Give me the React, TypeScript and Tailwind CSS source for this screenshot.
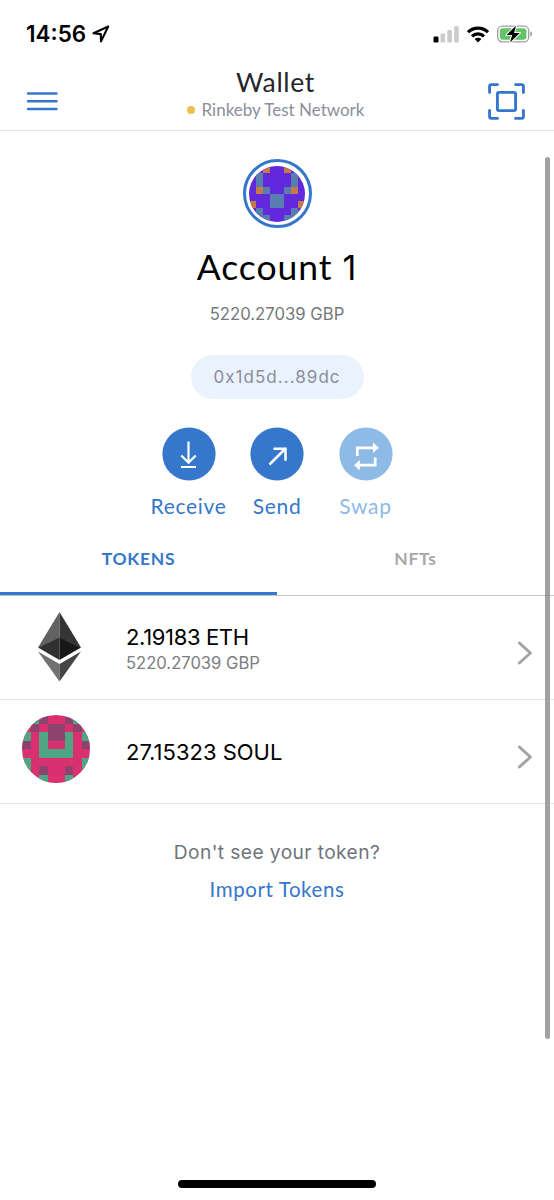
import type { ReactNode } from "react";

const ACCOUNT_GRID = [
  "..o..o..",
  ".b....b.",
  ".b....b.",
  ".ob..bo.",
  "...bb...",
  "o..bb..o",
  ".b....b.",
  ".bb..bb.",
];

const SOUL_GRID = [
  ".gp..pg.",
  ".p.pp.p.",
  "g.gppg.g",
  "p.g..g.p",
  "..gggg..",
  "g......g",
  "g.p..p.g",
  "..g..g..",
];

function Identicon({ grid, base, colors, id, className }: { grid: string[]; base: string; colors: Record<string, string>; id: string; className: string }) {
  return (
    <svg viewBox="0 0 8 8" className={className}>
      <clipPath id={id}>
        <circle cx="4" cy="4" r="4" />
      </clipPath>
      <g clipPath={`url(#${id})`}>
        <rect width="8" height="8" fill={base} />
        {grid.flatMap((row, y) =>
          row.split("").map((c, x) => (c === "." ? null : <rect key={`${x}-${y}`} x={x} y={y} width="1" height="1" fill={colors[c]} shapeRendering="crispEdges" />)),
        )}
      </g>
    </svg>
  );
}

function StatusBar() {
  return (
    <div className="flex h-[68px] items-center justify-between pl-[26px] pr-[21px]">
      <div className="flex items-center gap-[6px]">
        <span className="font-[Inter] text-[22.5px] leading-[68px] font-semibold text-black">14:56</span>
        <svg width="18" height="18" viewBox="0 0 18 18" fill="none" stroke="black" strokeWidth="2.1" strokeLinejoin="round">
          <path d="M16.2 1.5 1.5 8.2l7.3.9.2 7.3z" />
        </svg>
      </div>
      <div className="flex items-center gap-[8px]">
        <svg width="26" height="17" viewBox="0 0 26 17">
          <rect x="0.5" y="10.5" width="5" height="6" rx="1.2" fill="black" />
          <rect x="7.5" y="7.5" width="4.6" height="9" rx="1.2" fill="#cbcbcb" />
          <rect x="14.3" y="4" width="4.6" height="12.5" rx="1.2" fill="#cbcbcb" />
          <rect x="21.2" y="0.3" width="4.6" height="16.2" rx="1.2" fill="#cbcbcb" />
        </svg>
        <svg width="22" height="17" viewBox="0 0 22 17" fill="none" stroke="black" strokeWidth="3.2">
          <path d="M1 6.2a14.2 14.2 0 0 1 20 0" />
          <path d="M5 10.4a8.6 8.6 0 0 1 12 0" />
          <path d="M11 16.4 7.6 13a4.9 4.9 0 0 1 6.8 0z" fill="black" stroke="none" />
        </svg>
        <svg width="36" height="18" viewBox="0 0 36 18">
          <rect x="0.7" y="1.2" width="31" height="15.6" rx="4.6" fill="none" stroke="#a0a0a0" strokeWidth="1.3" />
          <rect x="2.8" y="3.2" width="26.6" height="11.6" rx="2.8" fill="#62c466" />
          <path d="M33.3 6.3c2.5.9 2.5 4.5 0 5.4z" fill="#a0a0a0" />
          <path d="M18.9 0.8 9.6 10h5.6l-2.2 7.6L22.8 8h-5.7z" fill="black" stroke="white" strokeWidth="2" paintOrder="stroke" strokeLinejoin="round" />
        </svg>
      </div>
    </div>
  );
}

function Header() {
  return (
    <header className="flex h-[63px] items-start justify-between border-b border-[#e4e5e7] pl-[26px] pr-[29px]">
      <svg width="37" height="20" viewBox="0 0 37 20" className="mt-[23px]" stroke="#3577cb" strokeWidth="2.4" strokeLinecap="round">
        <path d="M2 2.5h28.5M2 10.3h28.5M2 18h28.5" />
      </svg>
      <div className="flex flex-col items-center">
        <h1 className="-mt-px font-[Lato] text-[26.5px] leading-[30px] tracking-[0.65px] text-[#24272a]">Wallet</h1>
        <div className="mt-px flex items-center gap-[7px]">
          <span className="-mt-px size-[8px] rounded-full bg-[#ecbf50]" />
          <span className="font-[Lato] text-[17px] leading-[24px] text-[#8b8e9b]">Rinkeby Test Network</span>
        </div>
      </div>
      <svg width="37" height="37" viewBox="0 0 37 37" fill="none" stroke="#3577cb" strokeWidth="2.9" strokeLinecap="round" strokeLinejoin="round" className="mt-[15px]">
        <path d="M1.6 9.5V3.2q0-1.6 1.6-1.6h6.3M27.5 1.6h6.3q1.6 0 1.6 1.6v6.3M35.4 27.5v6.3q0 1.6-1.6 1.6h-6.3M9.5 35.4H3.2q-1.6 0-1.6-1.6v-6.3" />
        <rect x="9.4" y="9.4" width="18.2" height="18.2" rx="1.6" />
      </svg>
    </header>
  );
}

function Action({ label, children, muted = false }: { label: string; children: ReactNode; muted?: boolean }) {
  return (
    <div className={muted ? "flex w-[88.5px] flex-col items-center text-[#8ebae6]" : "flex w-[88.5px] flex-col items-center text-[#3577cb]"}>
      <svg width="54" height="54" viewBox="0 0 54 54">
        <circle cx="27" cy="27" r="26.6" fill="currentColor" />
        {children}
      </svg>
      <span className="mt-[10px] font-[Lato] text-[21px] leading-[30px] tracking-[0.7px] whitespace-nowrap">{label}</span>
    </div>
  );
}

function Chevron() {
  return (
    <svg width="16" height="24" viewBox="0 0 16 24" fill="none" stroke="#a3a3a3" strokeWidth="3" strokeLinecap="round" strokeLinejoin="round">
      <path d="M2.4 2 13.4 12 2.4 22" />
    </svg>
  );
}

function EthLogo() {
  return (
    <svg width="44" height="70" viewBox="0 0 44 70" className="mb-[2px]">
      <path d="M21.5 0v26L0 35.5z" fill="#626262" />
      <path d="M21.5 0v26L43 35.5z" fill="#353535" />
      <path d="M21.5 25.5V48L0 35.5z" fill="#303030" />
      <path d="M21.5 25.5V48L43 35.5z" fill="#171717" />
      <path d="M0 39.5 21.5 52v17.5z" fill="#717171" />
      <path d="M43 39.5 21.5 52v17.5z" fill="#454545" />
    </svg>
  );
}

export default function App() {
  return (
    <div className="relative flex h-[1200px] w-[554px] flex-col overflow-hidden bg-white">
      <StatusBar />
      <Header />
      <main className="flex flex-1 flex-col">
        <section className="flex flex-col items-center pt-[28px]">
          <div className="flex size-[69px] items-center justify-center rounded-full border-[3px] border-[#3577cb]">
            <Identicon id="account" grid={ACCOUNT_GRID} base="#6228dc" colors={{ o: "#c57a4a", b: "#5a7db0" }} className="size-[56px]" />
          </div>
          <h2 className="mt-[16px] font-[Lato] text-[35.5px] leading-[46px] tracking-[0.95px] text-black">
            Account <span className="font-[Inter] text-[34px]">1</span>
          </h2>
          <p className="mt-[11px] font-[Inter] text-[16.7px] leading-[24px] text-[#75787c]">5220.27039 GBP</p>
          <div className="mt-[29px] flex h-[44px] w-[173px] items-center justify-center rounded-full bg-[#eaf3fd]">
            <span className="mt-px font-[Inter] text-[17px] tracking-[1.05px] text-[#8b8e99]">0x1d5d...89dc</span>
          </div>
          <div className="mt-[28px] flex">
            <Action label="Receive">
              <path d="M26.5 14.5v21M19.3 28.5l7.2 7.2 7.2-7.2M19 40h15" fill="none" stroke="white" strokeWidth="2.2" />
            </Action>
            <Action label="Send">
              <path d="M19.5 37.5 35 22M23.5 21.8h12v12" fill="none" stroke="white" strokeWidth="2.5" />
            </Action>
            <Action label="Swap" muted>
              <path d="M18.3 29v-8.2h16M36.2 30.5v7.7h-16" fill="none" stroke="white" strokeWidth="2.7" />
              <path d="M34 15.6v10.4l5.8-5.2zM20.8 33v10.4L15 38.2z" fill="white" />
            </Action>
          </div>
        </section>
        <nav className="mt-[21px] flex h-[54px] border-b border-[#c4c4c6]">
          <div className="flex w-[277px] justify-center border-b-[3px] border-[#3577cb] font-[Lato] text-[17.5px] leading-[33px] font-bold tracking-[0.7px] text-[#3577cb]">
            <span>TOKENS</span>
          </div>
          <div className="flex w-[277px] justify-center font-[Lato] text-[17.5px] leading-[33px] font-bold tracking-[0.7px] text-[#a8a8aa]">
            <span>NFTs</span>
          </div>
        </nav>
        <div className="flex h-[104px] items-center border-b border-[#e6e7e8] pr-[21px] pl-[38px]">
          <EthLogo />
          <div className="ml-[44px] flex flex-1 flex-col pt-[3px]">
            <span className="self-start font-[Inter] text-[22px] leading-[28px] tracking-[-0.35px] text-black">2.19183 ETH</span>
            <span className="self-start font-[Inter] text-[16.6px] leading-[25px] text-[#7b7d80]">5220.27039 GBP</span>
          </div>
          <div className="mt-[10px]"><Chevron /></div>
        </div>
        <div className="flex h-[104px] items-center border-b border-[#e6e7e8] pr-[21px] pl-[22px]">
          <Identicon id="soul" grid={SOUL_GRID} base="#d9306f" colors={{ g: "#4fa684", p: "#8e426e" }} className="mb-[5px] size-[68px]" />
          <div className="ml-[36px] flex flex-1">
            <span className="font-[Inter] text-[22px] leading-[28px] text-black">27.15323 SOUL</span>
          </div>
          <div className="mt-[10px]"><Chevron /></div>
        </div>
        <section className="flex flex-col items-center pt-[33px]">
          <p className="font-[Inter] text-[19.2px] leading-[30px] tracking-[0.4px] text-[#6f747c]">Don't see your token?</p>
          <p className="mt-[7px] font-[Lato] text-[20.5px] leading-[30px] tracking-[0.6px] text-[#3577cb]">Import Tokens</p>
        </section>
      </main>
      <div className="absolute top-[157px] right-[4px] h-[882px] w-[5px] rounded-full bg-[#8a8a8a]/80" />
      <div className="absolute bottom-[12px] left-[178px] h-[8px] w-[198px] rounded-full bg-black" />
    </div>
  );
}
